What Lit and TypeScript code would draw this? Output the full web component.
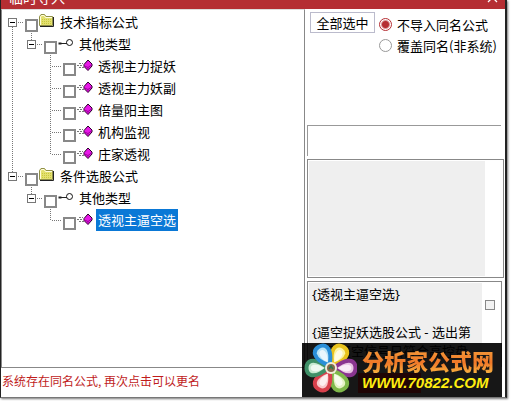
import { LitElement, html, css, svg, nothing } from "lit";
import { customElement, state } from "lit/decorators.js";
import { classMap } from "lit/directives/class-map.js";

interface TreeRow {
  label: string;
  level: number;
  icon: "folder" | "key" | "gem";
  up: boolean;
  down: boolean;
  open?: boolean;
  guides: boolean[];
}

const leaf = (label: string, down: boolean, trunk: boolean): TreeRow => ({
  label, level: 2, icon: "gem", up: true, down, guides: [trunk, false],
});

const ROWS: TreeRow[] = [
  { label: "技术指标公式", level: 0, icon: "folder", up: false, down: true, open: true, guides: [] },
  { label: "其他类型", level: 1, icon: "key", up: true, down: false, open: true, guides: [true] },
  leaf("透视主力捉妖", true, true),
  leaf("透视主力妖副", true, true),
  leaf("倍量阳主图", true, true),
  leaf("机构监视", true, true),
  leaf("庄家透视", false, true),
  { label: "条件选股公式", level: 0, icon: "folder", up: true, down: false, open: true, guides: [] },
  { label: "其他类型", level: 1, icon: "key", up: true, down: false, open: true, guides: [false] },
  leaf("透视主逼空选", false, false),
];

const ICONS = {
  folder: svg`
    <path d="M2 12.5H15.5V3" fill="none" stroke="#222" stroke-width="1"/>
    <path d="M1.5 11.5V2.5L3 .5H6.5L8 2.5H14.5V11.5Z" fill="#e3e070" stroke="#8f8f48"/>
    <path d="M2.5 11V3L3.5 1.5H6L7.5 3.5H14" fill="none" stroke="#fffde0"/>
    <path d="M4 5.5H13M4 7.5H13M4 9.5H13" stroke="#c9c93c" stroke-dasharray="1 1"/>`,
  key: svg`
    <circle cx="12.5" cy="6.5" r="3" fill="#fff" stroke="#111" stroke-width="1"/>
    <path d="M4 7.5H10" stroke="#222"/><path d="M1.5 6.5V8.5H4.5V6.5Z" fill="#222"/>`,
  gem: svg`
    <path d="M3 5.5H7M1 7.5H7M3 9.5H8" stroke="#777" stroke-dasharray="2 1"/>
    <path d="M12 2L16 6V8L12 12.5L8 8.5V6.5Z" fill="#e818e8" stroke="#2a002a"/>
    <path d="M8.5 8L12 9.5L15.5 7M12 9.5V12" fill="none" stroke="#a000a0"/>`,
};

const PETALS: [string, string][] = [
  ["#e8c21c", "#fbf3a0"],
  ["#8a3590", "#e9c4e4"],
  ["#7fb84a", "#e4f3c4"],
  ["#d8404c", "#f9c9cc"],
  ["#3f9068", "#c8ead2"],
  ["#2a8fd8", "#b8e4f8"],
];

@customElement("app-root")
export class AppRoot extends LitElement {
  @state() private selected = 9;

  static styles = css`
    :host {
      display: block;
      min-height: 100vh;
      box-sizing: border-box;
      padding: 0 5px 3px 0;
      background: #fff;
      color: #000;
      font: 13px/20px "Noto Sans CJK SC", sans-serif;
    }
    * { box-sizing: border-box; }
    .window {
      position: relative;
      display: flex;
      flex-direction: column;
      min-height: calc(100vh - 3px);
      border: solid #222;
      border-width: 0 2px 1px 1px;
      border-bottom-color: #777;
      box-shadow: 1px 1px 2px #777;
      overflow: hidden;
    }
    .title {
      display: flex;
      justify-content: space-between;
      align-items: flex-end;
      height: 9px;
      padding: 0 7px 0 8px;
      background: #b52e33;
      color: #fff;
      overflow: hidden;
    }
    .title h1 { margin: 0 0 3px; font-size: 14px; line-height: 18px; font-weight: 400; }
    .close { display: flex; margin: 0 0 6px; padding: 0; border: 0; background: none; }
    .main {
      flex: 1;
      display: grid;
      grid-template-columns: minmax(0, 1fr) 200px;
    }
    .tree {
      margin: 0;
      padding: 1px 0 0 6px;
      border: 1px solid #888;
      border-top-color: #ddd;
      list-style: none;
    }
    .row { display: flex; height: 22px; }
    .guide, .slot {
      position: relative;
      flex: none;
      width: 19px;
    }
    .slot { width: 17px; }
    .guide.on, .slot.up::before, .slot.down::after {
      background: repeating-linear-gradient(#777 0 1px, #fff 1px 2px) 4px 0 / 1px 100% no-repeat;
    }
    .slot::before, .slot::after {
      content: "";
      position: absolute;
      left: 0;
      width: 9px;
    }
    .slot::before { top: 0; height: 12px; }
    .slot::after { top: 12px; bottom: 0; }
    .dash {
      display: block;
      height: 1px;
      margin: 11px 2px 0 4px;
      background: repeating-linear-gradient(90deg, #777 0 1px, #fff 1px 2px);
    }
    .toggle {
      position: absolute;
      left: 0;
      top: 7px;
      z-index: 1;
      width: 9px;
      height: 9px;
      padding: 0;
      border: 1px solid #777;
      background: linear-gradient(#000, #000) 1px 3px / 5px 1px no-repeat #fff;
    }
    .tick {
      appearance: none;
      flex: none;
      width: 13px;
      height: 13px;
      margin: 8px 0 0;
      border: 2px solid #888;
      background: #fff;
    }
    .icon { flex: none; width: 17px; height: 14px; margin: 3px 3px 0 0; }
    .name { height: 22px; padding: 0 2px; line-height: 22px; white-space: nowrap; }
    .name.selected { background: #0a78d6; color: #fff; }
    .side {
      display: flex;
      flex-direction: column;
      padding: 3px 1px 0 2px;
    }
    .choices { display: flex; align-items: flex-start; gap: 4px; height: 113px; padding-left: 3px; }
    .all {
      width: 65px;
      height: 21px;
      padding: 0;
      border: 1px solid #bbbbcc;
      background: #fff;
      color: #000;
      font: inherit;
      line-height: 19px;
      white-space: nowrap;
    }
    .radios { margin: 2px 0 0; padding: 0; border: 0; }
    .option { display: flex; align-items: center; gap: 5px; height: 21px; line-height: 18px; white-space: nowrap; }
    .option input {
      appearance: none;
      flex: none;
      width: 13px;
      height: 13px;
      margin: 0;
      border: 1px solid #999;
      border-radius: 50%;
      background: #fff;
    }
    .option input:checked {
      border-color: #b52e33;
      background: radial-gradient(circle, #b52e33 3px, #fff 5px);
    }
    .frame {
      height: 31px;
      margin: 0 3px 3px 0;
      border: solid #999;
      border-width: 1px 0 0 1px;
    }
    .list {
      height: 119px;
      margin-bottom: 3px;
      padding: 1px 18px 1px 1px;
      border: 1px solid #888;
    }
    .list div { height: 100%; background: #efefef; }
    .note {
      display: flex;
      flex: 1;
      gap: 3px;
      margin: 0 2px 30px 0;
      padding: 1px;
      border: 1px solid #888;
      border-bottom: 0;
    }
    .note textarea {
      display: block;
      flex: 1;
      min-width: 0;
      height: 80px;
      padding: 2px 3px;
      border: 0;
      outline: 0;
      resize: none;
      overflow: hidden;
      background: #efefef;
      color: #000;
      font: 13px/19px "Noto Sans", "Noto Sans CJK SC", sans-serif;
      white-space: pre;
    }
    .note input {
      appearance: none;
      width: 10px;
      height: 10px;
      margin: 17px 5px 0 0;
      border: 1px solid #888;
      background: #f2f2f2;
    }
    .status {
      position: absolute;
      left: 0;
      right: 200px;
      bottom: 0;
      height: 30px;
      margin: 0;
      padding: 0 0 0 1px;
      border-top: 1px solid #888;
      background: #fff;
      color: #c01c1c;
      font-size: 12px;
      line-height: 26px;
      white-space: nowrap;
    }
    .marks {
      position: absolute;
      inset: 49px 0 0 0;
      overflow: hidden;
      pointer-events: none;
      color: rgba(0, 0, 0, 0.02);
      font: 24px/34px "Noto Sans", "Noto Sans CJK SC", sans-serif;
      white-space: nowrap;
    }
    .marks p { margin: 0 0 48px; }
    .marks span { margin-right: 18px; }
    .banner {
      position: absolute;
      right: 3px;
      bottom: 0;
      display: flex;
      align-items: center;
      gap: 5px;
      width: 200px;
      height: 54px;
      padding-left: 1px;
      background: rgba(0, 0, 0, 0.91);
      text-decoration: none;
      white-space: nowrap;
    }
    .flower { flex: none; width: 54px; height: 54px; }
    .brand { display: flex; flex-direction: column; }
    .brand b {
      font-size: 22px;
      line-height: 26px;
      font-weight: 900;
      color: transparent;
      background: linear-gradient(#f4a03c, #f07828 60%, #f8b040);
      background-clip: text;
      -webkit-background-clip: text;
    }
    .brand i {
      margin-left: -4px;
      padding-left: 4px;
      background: linear-gradient(90deg, #200505 63px, transparent 63px);
      color: #ffee10;
      font: italic bold 15px/20px "Liberation Sans", sans-serif;
    }
  `;

  private row(item: TreeRow, index: number) {
    return html`<li class="row" role="treeitem" aria-level=${item.level + 1} aria-selected=${this.selected === index}>
      ${item.guides.map((on) => html`<span class=${classMap({ guide: true, on })}></span>`)}
      <span class=${classMap({ slot: true, up: item.up, down: item.down })}>
        ${item.open ? html`<button class="toggle" aria-label="折叠"></button>` : nothing}
        <span class="dash"></span>
      </span>
      <input class="tick" type="checkbox" id="f${index}" />
      <svg class="icon" viewBox="0 0 17 14" aria-hidden="true">${ICONS[item.icon]}</svg>
      <label
        for="f${index}"
        class=${classMap({ name: true, selected: this.selected === index })}
        @click=${() => (this.selected = index)}
      >${item.label}</label>
    </li>`;
  }

  render() {
    return html`<div class="window">
      <header class="title">
        <h1>临时导入</h1>
        <button class="close" aria-label="关闭">
          <svg width="11" height="11" viewBox="0 0 11 11"><path d="M1 1L10 10M10 1L1 10" stroke="#fff" stroke-width="1.3" /></svg>
        </button>
      </header>
      <main class="main">
        <ul class="tree" role="tree">${ROWS.map((item, i) => this.row(item, i))}</ul>
        <section class="side">
          <div class="choices">
            <button class="all">全部选中</button>
            <fieldset class="radios">
              <label class="option"><input type="radio" name="mode" checked />不导入同名公式</label>
              <label class="option"><input type="radio" name="mode" />覆盖同名(非系统)</label>
            </fieldset>
          </div>
          <div class="frame"></div>
          <div class="list"><div></div></div>
          <div class="note">
            <textarea readonly aria-label="公式说明" .value=${"{透视主逼空选}\n\n{逼空捉妖选股公式 - 选出第\n一只逼空信号只符合高控盘"}></textarea>
            <input type="checkbox" aria-label="显示说明" />
          </div>
        </section>
      </main>
      <p class="status">系统存在同名公式, 再次点击可以更名</p>
      <div class="marks" aria-hidden="true">
        ${[0, 1, 2, 3].map(() => html`<p><span>分析家公式网www.70822.com</span><span>分析家公式网</span></p>`)}
      </div>
      <a class="banner" href="#">
        <svg class="flower" viewBox="0 2 54 54" aria-hidden="true">
          ${PETALS.map(([edge, fill], i) => svg`<g transform="rotate(${30 + i * 60} 28 27)">
            <path d="M28 24C22 17 20 11 21 7C23 1 33 1 35 7C36 11 34 17 28 24Z" fill=${fill} stroke=${edge} stroke-width="4" stroke-linejoin="round"/>
            <path d="M28 20C25 16 24 12 25 9C26 6 30 6 31 9C32 12 31 16 28 20Z" fill="#fff" opacity=".7"/>
          </g>`)}
          <circle cx="28" cy="27" r="6" fill="#f0ecdc" /><circle cx="28" cy="27" r="4" fill="#8a6a4a" />
          <path d="M26 28L28 25L30 28" stroke="#2a7a50" stroke-width="1.5" fill="none" />
        </svg>
        <span class="brand"><b>分析家公式网</b><i>WWW.70822.COM</i></span>
      </a>
    </div>`;
  }
}
